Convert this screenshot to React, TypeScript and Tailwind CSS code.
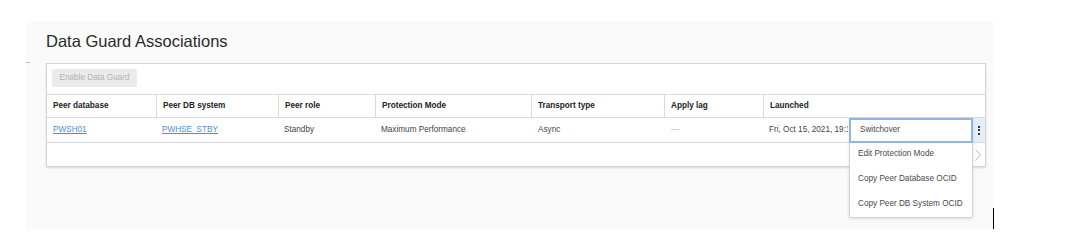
import React from 'react';

interface Column {
  label: string;
  width: string;
}

const COLUMNS: Column[] = [
  { label: 'Peer database', width: 'w-[109px]' },
  { label: 'Peer DB system', width: 'w-[122px] border-l border-[#dadada]' },
  { label: 'Peer role', width: 'w-[97px] border-l border-[#dadada]' },
  { label: 'Protection Mode', width: 'w-[156px] border-l border-[#dadada]' },
  { label: 'Transport type', width: 'w-[133px] border-l border-[#dadada]' },
  { label: 'Apply lag', width: 'w-[99px] border-l border-[#dadada]' },
  { label: 'Launched', width: 'flex-1 border-l border-[#dadada]' },
];

const MENU_ITEMS: string[] = [
  'Switchover',
  'Edit Protection Mode',
  'Copy Peer Database OCID',
  'Copy Peer DB System OCID',
];

function RowMenu() {
  return (
    <div className="absolute left-[802px] top-[54px] w-[124px] rounded-[2px] border border-[#d4d4d4] bg-white shadow-[0_1px_3px_rgba(0,0,0,0.12)]">
      {MENU_ITEMS.map((item, i) => (
        <div
          key={item}
          className={`flex h-[25px] items-center px-[8px] text-[8.2px] text-[#4a4a4a] ${
            i === 0 ? 'border-2 border-[#92b5e2] -m-px h-[25px] px-[9px]' : ''
          }`}
        >
          {item}
        </div>
      ))}
    </div>
  );
}

export default function App() {
  return (
    <div className="relative h-[245px] w-[1082px] overflow-hidden bg-white pt-[21px] font-['Liberation_Sans',Arial,sans-serif]">
      <div className="relative ml-[26px] h-[208px] w-[967px] bg-[#fafafa] pl-[20px] pt-[10px]">
        {/* little mark on the left edge */}
        <div className="absolute left-0 top-[41px] h-px w-[4px] bg-[#bdbdbd]" />

        <h2 className="h-[20px] text-[16.5px] leading-[20px] text-[#2b2b2b]">Data Guard Associations</h2>

        <div className="relative mt-[12px] w-[940px] border border-[#d6d6d6] bg-white text-[8.2px] shadow-[0_1px_2px_rgba(0,0,0,0.14)]">
          {/* Toolbar */}
          <div className="h-[30px] pl-[5px] pt-[5px]">
            <button
              type="button"
              className="flex h-[18px] w-[85px] items-center justify-center rounded-[2px] bg-[#ebebeb] text-[8.2px] text-[#b3b3b3]"
            >
              Enable Data Guard
            </button>
          </div>

          {/* Header */}
          <div className="flex h-[23px] border-t border-[#dadada] font-bold text-[#222]">
            {COLUMNS.map((col) => (
              <div key={col.label} className={`flex items-center pl-[6px] ${col.width}`}>
                {col.label}
              </div>
            ))}
          </div>

          {/* Data row */}
          <div className="flex h-[25px] border-t border-[#dadada] text-[#444]">
            <div className="flex w-[109px] items-center pl-[6px]">
              <a className="text-[#4b8fdb] underline">PWSH01</a>
            </div>
            <div className="flex w-[122px] items-center pl-[6px]">
              <a className="text-[#4b8fdb] underline">PWHSE_STBY</a>
            </div>
            <div className="flex w-[97px] items-center pl-[6px]">Standby</div>
            <div className="flex w-[156px] items-center pl-[6px]">Maximum Performance</div>
            <div className="flex w-[133px] items-center pl-[7px]">Async</div>
            <div className="flex w-[99px] items-center pl-[7px] text-[#b0b0b0]">—</div>
            <div className="flex flex-1 items-center pl-[6px]">
              <span className="w-[79px] overflow-hidden whitespace-nowrap">Fri, Oct 15, 2021, 19:10:22 UTC</span>
            </div>
            <div className="flex w-[13px] flex-col items-center justify-center gap-[1.5px] bg-[#e4edf8]">
              <span className="h-[2px] w-[2px] bg-[#333]" />
              <span className="h-[2px] w-[2px] bg-[#333]" />
              <span className="h-[2px] w-[2px] bg-[#333]" />
            </div>
          </div>

          {/* Empty row */}
          <div className="flex h-[24px] items-center justify-end border-t border-[#dadada] pr-[4px]">
            <svg width="6" height="12" viewBox="0 0 6 12" fill="none">
              <path d="M0.5 0.5 L5.5 6 L0.5 11.5" stroke="#bdbdbd" strokeWidth="1" />
            </svg>
          </div>

          <RowMenu />
        </div>
      </div>

      {/* text cursor */}
      <div className="absolute left-[993px] top-[208px] h-[21px] w-px bg-black" />
    </div>
  );
}
